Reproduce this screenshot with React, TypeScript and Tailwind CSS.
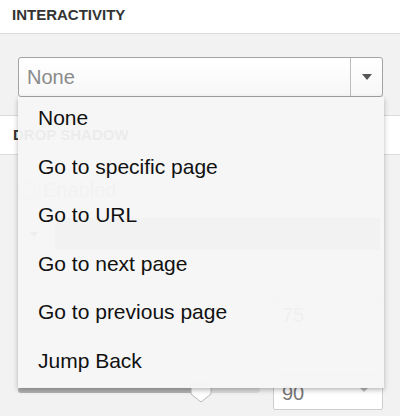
const menuOptions = [
  "None",
  "Go to specific page",
  "Go to URL",
  "Go to next page",
  "Go to previous page",
  "Jump Back",
]

function SectionHeader({ title, className = "" }: { title: string; className?: string }) {
  return (
    <div
      className={`flex h-[40px] items-center border-[#dcdcdc] bg-white pl-[13px] text-[15px] font-bold text-[#333] ${className}`}
    >
      {title}
    </div>
  )
}

function ValueBox({ value, withCaret }: { value: string; withCaret?: boolean }) {
  return (
    <div className="relative flex h-[35px] w-[110px] items-center rounded-[2px] border border-[#cfcfcf] bg-white pl-[8px] text-[20px] text-[#777]">
      {value}
      {withCaret && (
        <span className="absolute right-[14px] top-[12px] h-0 w-0 border-x-[4px] border-t-[4px] border-x-transparent border-t-[#bbb]" />
      )}
    </div>
  )
}

export default function App() {
  return (
    <div className="relative h-[416px] w-[400px] overflow-hidden bg-[#f2f2f2] font-['Liberation_Sans',Arial,sans-serif]">
      {/* interactivity */}
      <div className="flex h-[34px] items-center border-b border-[#dcdcdc] bg-white pl-[12px] pb-[2px] text-[15px] font-bold text-[#333]">
        INTERACTIVITY
      </div>
      <div className="pl-[18px] pr-[17px] pt-[23px] pb-[18px]">
        <div className="flex h-[40px] items-stretch rounded-[3px] border border-[#a3a3a3] bg-gradient-to-b from-white to-[#f7f7f7]">
          <div className="flex flex-1 items-center pl-[8px] text-[20px] text-[#8a8a8a]">None</div>
          <div className="flex w-[32px] items-center justify-center border-l border-[#bdbdbd]">
            <span className="h-0 w-0 border-x-[5px] border-t-[6px] border-x-transparent border-t-[#555]" />
          </div>
        </div>
      </div>

      {/* drop shadow (sits under the open menu) */}
      <SectionHeader title="DROP SHADOW" className="border-y" />
      <div className="flex flex-col pl-[18px] pr-[17px] pt-[23px]">
        <div className="flex h-[24px] items-center gap-[8px]">
          <span className="h-[17px] w-[17px] rounded-[3px] border border-[#c8c8c8] bg-white" />
          <span className="text-[20px] text-[#aaa]">Enabled</span>
        </div>
        <div className="mt-[16px] flex h-[32px] items-center pl-[12px] pr-[3px]">
          <span className="h-0 w-0 border-x-[4px] border-t-[5px] border-x-transparent border-t-[#666]" />
          <div className="ml-[17px] h-[32px] flex-1 rounded-[2px] bg-[#a8a8a8]" />
        </div>
        <div className="mt-[47px] flex h-[35px] items-center justify-end">
          <ValueBox value="75" />
        </div>
        <div className="mt-[43px] flex h-[35px] items-start">
          <div className="relative h-[35px] w-[242px]">
            <div className="mt-[12px] flex h-[6px] w-full overflow-hidden rounded-[3px]">
              <div className="w-[180px] bg-[#b3b3b3]" />
              <div className="flex-1 bg-[#dedede]" />
            </div>
            <svg
              className="absolute left-[172px] top-[8px]"
              width="22"
              height="20"
              viewBox="0 0 22 20"
            >
              <path d="M1 1 H21 V11 L11 19 L1 11 Z" fill="#fff" stroke="#b8b8b8" strokeWidth="1" />
            </svg>
          </div>
          <div className="ml-auto">
            <ValueBox value="90" withCaret />
          </div>
        </div>
      </div>

      {/* open menu */}
      <div className="absolute left-[18px] top-[97px] h-[291px] w-[366px] bg-[#f5f5f5]/[0.95] shadow-[0_2px_5px_rgba(0,0,0,0.28)]">
        {menuOptions.map((option) => (
          <div
            key={option}
            className="h-[48.5px] pl-[20px] pt-[9px] text-[21px] leading-[24px] text-[#111]"
          >
            {option}
          </div>
        ))}
      </div>
    </div>
  )
}
